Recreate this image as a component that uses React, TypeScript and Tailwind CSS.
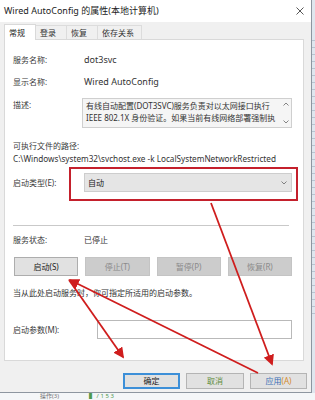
const font = "font-['Segoe_UI','Noto_Sans','Noto_Sans_CJK_SC',sans-serif]";

const tabs = [
  { label: "常规", w: "w-[32px]", active: true },
  { label: "登录", w: "w-[31px]", active: false },
  { label: "恢复", w: "w-[31px]", active: false },
  { label: "依存关系", w: "w-[44px]", active: false },
];

const actions = [
  { label: "启动(S)", enabled: true },
  { label: "停止(T)", enabled: false },
  { label: "暂停(P)", enabled: false },
  { label: "恢复(R)", enabled: false },
];

function Label({ children }: { children: React.ReactNode }) {
  return <span className="w-[71px] shrink-0 text-[8px] leading-[12px] text-[#3a3a3a]">{children}</span>;
}

function Arrows() {
  return (
    <svg className="absolute inset-0 pointer-events-none" width="315" height="400">
      <defs>
        <marker id="head" markerWidth="6" markerHeight="6" refX="5" refY="3" orient="auto" markerUnits="strokeWidth">
          <path d="M0,0 L6,3 L0,6 z" fill="#cf1d1d" />
        </marker>
      </defs>
      <g stroke="#cf1d1d" strokeWidth="1.8" fill="none">
        <line x1="211" y1="203" x2="272" y2="364" markerEnd="url(#head)" />
        <line x1="69" y1="280" x2="123" y2="357" markerEnd="url(#head)" />
        <line x1="258" y1="373" x2="70" y2="280" markerEnd="url(#head)" />
      </g>
    </svg>
  );
}

export default function App() {
  return (
    <div className={`relative w-[315px] h-[400px] overflow-hidden bg-[#f4f6f8] ${font}`}>
      <div className="flex h-[393px]">
        {/* dialog */}
        <div className="w-[312px] shrink-0 flex flex-col bg-[#f0f0f0] border-r border-b border-[#8d96a0]">
          <div className="h-[22px] bg-white flex items-center justify-between pl-[4px] pr-[7px]">
            <span className="text-[9px] text-[#222]">Wired AutoConfig 的属性(本地计算机)</span>
            <svg width="8" height="8" viewBox="0 0 8 8">
              <path d="M0.5 0.5 L7.5 7.5 M7.5 0.5 L0.5 7.5" stroke="#444" strokeWidth="0.9" />
            </svg>
          </div>

          <div className="flex flex-col pl-[4px] pr-[7px] pt-[1px]">
            <div className="flex items-end h-[16px]">
              {tabs.map((t) =>
                t.active ? (
                  <div key={t.label} className={`${t.w} h-[16px] bg-white border border-b-0 border-[#d9d9d9] pl-[4px] text-[8px] leading-[15px] text-[#222] relative top-[1px]`}>
                    {t.label}
                  </div>
                ) : (
                  <div key={t.label} className={`${t.w} h-[14px] bg-[#f0f0f0] border-t border-r border-[#dcdcdc] pl-[4px] text-[8px] leading-[14px] text-[#333]`}>
                    {t.label}
                  </div>
                )
              )}
            </div>

            <div className="h-[322px] bg-white border border-[#d9d9d9] flex flex-col pl-[8px] pr-[11px] pt-[14px]">
              <div className="flex items-center h-[12px]">
                <Label>服务名称:</Label>
                <span className="text-[9px] text-[#333]">dot3svc</span>
              </div>
              <div className="flex items-center h-[12px] mt-[10px]">
                <Label>显示名称:</Label>
                <span className="text-[9px] text-[#333]">Wired AutoConfig</span>
              </div>
              <div className="flex mt-[10px]">
                <Label>
                  <span className="block pt-[1px]">描述:</span>
                </Label>
                <div className="flex-1 h-[30px] ml-[-2px] bg-[#f5f5f5] border border-[#cfcfcf] flex">
                  <div className="flex-1 overflow-hidden pl-[3px] pt-[1px] text-[8px] leading-[12px] text-[#333] whitespace-nowrap">
                    <div>有线自动配置(DOT3SVC)服务负责对以太网接口执行</div>
                    <div>IEEE 802.1X 身份验证。如果当前有线网络部署强制执</div>
                  </div>
                  <div className="w-[10px] flex flex-col items-center justify-between py-[3px]">
                    <svg width="6" height="4" viewBox="0 0 6 4"><path d="M0.5 3.5 L3 1 L5.5 3.5" stroke="#666" strokeWidth="0.8" fill="none" /></svg>
                    <svg width="6" height="4" viewBox="0 0 6 4"><path d="M0.5 0.5 L3 3 L5.5 0.5" stroke="#666" strokeWidth="0.8" fill="none" /></svg>
                  </div>
                </div>
              </div>
              <div className="mt-[12px] text-[8px] leading-[12px] text-[#3a3a3a]">可执行文件的路径:</div>
              <div className="mt-[1px] text-[8.2px] leading-[12px] text-[#333] whitespace-nowrap">
                C:\Windows\system32\svchost.exe -k LocalSystemNetworkRestricted
              </div>
              <div className="flex items-center mt-[8px]">
                <Label>启动类型(E):</Label>
                <div className="flex-1 h-[19px] bg-[#e5e5e5] border border-[#cdcdcd] flex items-center justify-between pl-[3px] pr-[4px]">
                  <span className="text-[8px] text-[#222]">自动</span>
                  <svg width="6" height="4" viewBox="0 0 6 4"><path d="M0.5 0.5 L3 3 L5.5 0.5" stroke="#666" strokeWidth="0.8" fill="none" /></svg>
                </div>
              </div>

              <div className="mt-[33px] h-px bg-[#c9c9c9] mr-[3px]" />

              <div className="flex items-center h-[12px] mt-[8px]">
                <Label>服务状态:</Label>
                <span className="text-[8px] text-[#333]">已停止</span>
              </div>

              <div className="grid grid-cols-4 gap-x-[7px] mt-[11px] ml-[1px]">
                {actions.map((a) => (
                  <div
                    key={a.label}
                    className={`h-[19px] flex items-center justify-center text-[8px] border ${
                      a.enabled ? "bg-[#e1e1e1] border-[#adadad] text-[#222]" : "bg-[#cccccc] border-[#c4c4c4] text-[#8a8a8a]"
                    }`}
                  >
                    {a.label}
                  </div>
                ))}
              </div>

              <div className="mt-[11px] text-[8px] leading-[12px] text-[#333]">当从此处启动服务时，你可指定所适用的启动参数。</div>

              <div className="flex items-center mt-[21px]">
                <span className="w-[84px] shrink-0 text-[8px] leading-[12px] text-[#3a3a3a]">启动参数(M):</span>
                <div className="flex-1 h-[19px] bg-white border border-[#b9b9b9]" />
              </div>
            </div>

            <div className="flex justify-end gap-[6px] mt-[12px] mr-[-3px]">
              <div className="w-[57px] h-[16px] bg-[#e1e1e1] border-2 border-[#3c8fd8] flex items-center justify-center text-[8px] text-[#222]">确定</div>
              <div className="w-[58px] h-[16px] bg-[#e1e1e1] border border-[#b4b4b4] flex items-center justify-center text-[8px] text-[#5f8c3a]">取消</div>
              <div className="w-[57px] h-[16px] bg-[#e1e1e1] border border-[#b4b4b4] flex items-center justify-center text-[8px]">
                <span className="text-[#3b6fb6]">应用</span>
                <span className="text-[#d48a2e]">(A)</span>
              </div>
            </div>
          </div>
        </div>
        {/* background window behind */}
        <div className="flex-1 bg-[#dfe6ee] flex flex-col gap-[6px] pt-[40px]">
          {Array.from({ length: 40 }).map((_, i) => (
            <div key={i} className="h-px bg-[#b8c4d0]" />
          ))}
        </div>
      </div>
      <div className="flex items-center h-[7px] pl-[40px] gap-[30px] text-[6px] leading-[7px] text-[#777]">
        <span>操作(3)</span>
        <span className="text-[#4e9a4e]">▌ / 1 5 3</span>
      </div>

      {/* annotation box */}
      <div className="absolute left-[69px] top-[167px] w-[229px] h-[34px] border-2 border-[#c4202c]" />
      <Arrows />
    </div>
  );
}
